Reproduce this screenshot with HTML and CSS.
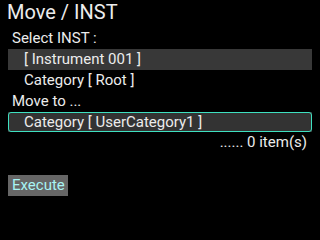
FILE: index.html
```html
<!DOCTYPE html>
<html lang="en">
<head>
  <meta charset="UTF-8" />
  <title>Move / INST</title>
  <link rel="stylesheet" href="styles.css">
</head>
<body>
  <div class="title">Move / INST</div>
  <div class="panel">
    <div class="label">Select INST :</div>
    <div class="item selected">[ Instrument 001 ]</div>
    <div class="item">Category [ Root ]</div>
    <div class="label">Move to ...</div>
    <div class="item focused"><span>Category [ UserCategory1 ]</span></div>
    <div class="count">...... 0 item(s)</div>
    <div class="actions">
      <button class="execute">Execute</button>
    </div>
  </div>
</body>
</html>
```

FILE: styles.css
```css
body {
  margin: 0;
  width: 320px;
  height: 240px;
  background: #000;
  color: #ececec;
  font-family: Roboto, "Liberation Sans", sans-serif;
  overflow: hidden;
}
.title {
  font-size: 20px;
  line-height: 24px;
  padding-left: 7px;
  margin-bottom: 4px;
}
.panel {
  padding: 0 8px;
  font-size: 15px;
  line-height: 21px;
}
.label {
  padding-left: 4px;
}
.item {
  padding-left: 16px;
}
.selected {
  background: #383838;
}
.focused {
  background: #333;
  padding: 0;
}
.focused span {
  display: block;
  height: 18px;
  line-height: 18px;
  padding-left: 15px;
  border: 1px solid #3ee0c0;
  border-radius: 3px;
}
.count {
  text-align: right;
  padding-right: 5px;
}
.actions {
  margin-top: 22px;
}
.execute {
  background: #666;
  color: #a8f4f4;
  border: none;
  border-radius: 0;
  font-family: inherit;
  font-size: 15px;
  line-height: 21px;
  padding: 0 3px 0 4px;
  width: 60px;
  text-align: left;
}
```
